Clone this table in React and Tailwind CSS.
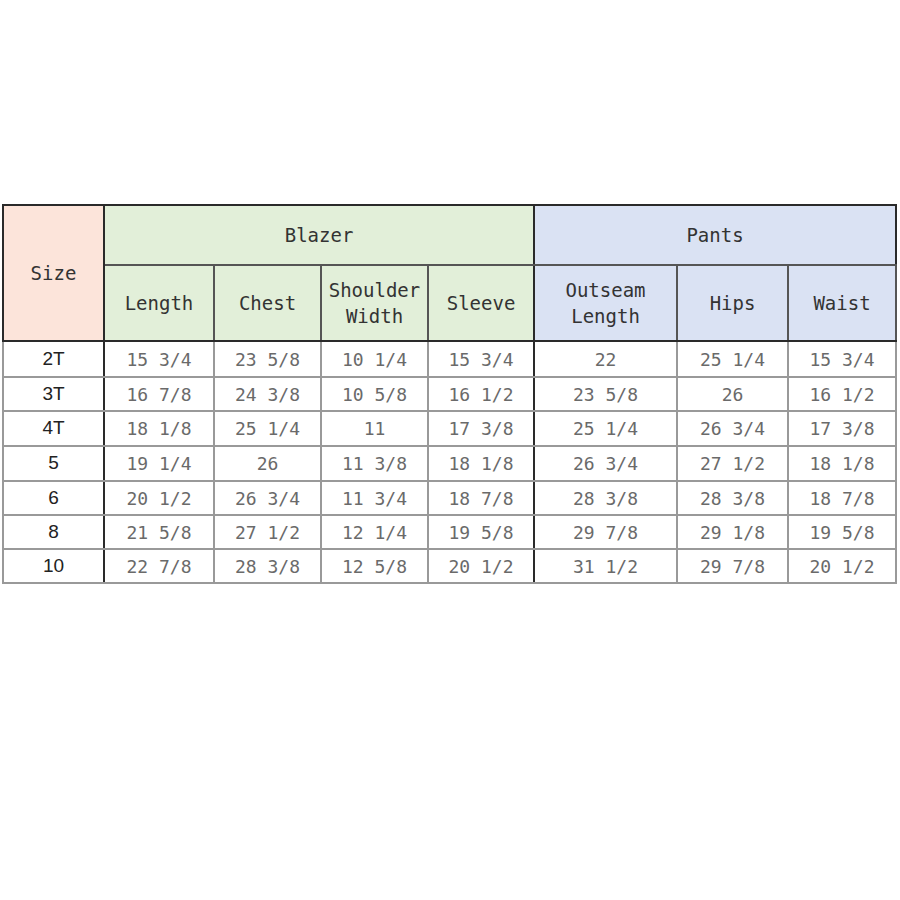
const rows = [
  ['2T', '15 3/4', '23 5/8', '10 1/4', '15 3/4', '22', '25 1/4', '15 3/4'],
  ['3T', '16 7/8', '24 3/8', '10 5/8', '16 1/2', '23 5/8', '26', '16 1/2'],
  ['4T', '18 1/8', '25 1/4', '11', '17 3/8', '25 1/4', '26 3/4', '17 3/8'],
  ['5', '19 1/4', '26', '11 3/8', '18 1/8', '26 3/4', '27 1/2', '18 1/8'],
  ['6', '20 1/2', '26 3/4', '11 3/4', '18 7/8', '28 3/8', '28 3/8', '18 7/8'],
  ['8', '21 5/8', '27 1/2', '12 1/4', '19 5/8', '29 7/8', '29 1/8', '19 5/8'],
  ['10', '22 7/8', '28 3/8', '12 5/8', '20 1/2', '31 1/2', '29 7/8', '20 1/2'],
];

const rowHeights = ['h-[36px]', 'h-[34px]', 'h-[35px]', 'h-[35px]', 'h-[34px]', 'h-[34px]', 'h-[34px]'];

const mono = "font-['DejaVu_Sans_Mono',monospace]";

export default function App() {
  return (
    <div className="w-[900px] h-[900px] bg-white pt-[204px] pl-[2px]">
      <table className={`table-fixed border-collapse w-[893px] border-2 border-[#2a2a2a] ${mono} text-[19px] text-[#333]`}>
        <colgroup>
          <col className="w-[101px]" />
          <col className="w-[110px]" />
          <col className="w-[107px]" />
          <col className="w-[107px]" />
          <col className="w-[106px]" />
          <col className="w-[143px]" />
          <col className="w-[111px]" />
          <col className="w-[108px]" />
        </colgroup>
        <thead>
          <tr className="h-[60px]">
            <th rowSpan={2} className="bg-[#fce4da] font-normal border-2 border-[#2a2a2a]">Size</th>
            <th colSpan={4} className="bg-[#e2efd9] font-normal border-2 border-[#2a2a2a] border-b-[#555]">Blazer</th>
            <th colSpan={3} className="bg-[#dae2f3] font-normal border-2 border-[#2a2a2a] border-b-[#555]">Pants</th>
          </tr>
          <tr className="h-[76px] leading-[26px]">
            <th className="bg-[#e2efd9] font-normal border-2 border-[#555] border-l-[#2a2a2a] border-b-[#2a2a2a]">Length</th>
            <th className="bg-[#e2efd9] font-normal border-2 border-[#555] border-b-[#2a2a2a]">Chest</th>
            <th className="bg-[#e2efd9] font-normal border-2 border-[#555] border-b-[#2a2a2a]">Shoulder<br />Width</th>
            <th className="bg-[#e2efd9] font-normal border-2 border-[#555] border-r-[#2a2a2a] border-b-[#2a2a2a]">Sleeve</th>
            <th className="bg-[#dae2f3] font-normal border-2 border-[#555] border-l-[#2a2a2a] border-b-[#2a2a2a]">Outseam<br />Length</th>
            <th className="bg-[#dae2f3] font-normal border-2 border-[#555] border-b-[#2a2a2a]">Hips</th>
            <th className="bg-[#dae2f3] font-normal border-2 border-[#555] border-b-[#2a2a2a]">Waist</th>
          </tr>
        </thead>
        <tbody>
          {rows.map((r, i) => (
            <tr key={r[0]} className={rowHeights[i]}>
              <td className="text-center border-2 border-[#999] border-r-[#2a2a2a] font-['Liberation_Sans',sans-serif] text-[19px] text-[#222]">{r[0]}</td>
              {r.slice(1).map((v, j) => (
                <td
                  key={j}
                  className={`text-center border-2 border-[#999] text-[18px] text-[#6a6a6a] whitespace-pre ${j === 3 ? 'border-r-[#2a2a2a]' : ''}`}
                >
                  {v}
                </td>
              ))}
            </tr>
          ))}
        </tbody>
      </table>
    </div>
  );
}
